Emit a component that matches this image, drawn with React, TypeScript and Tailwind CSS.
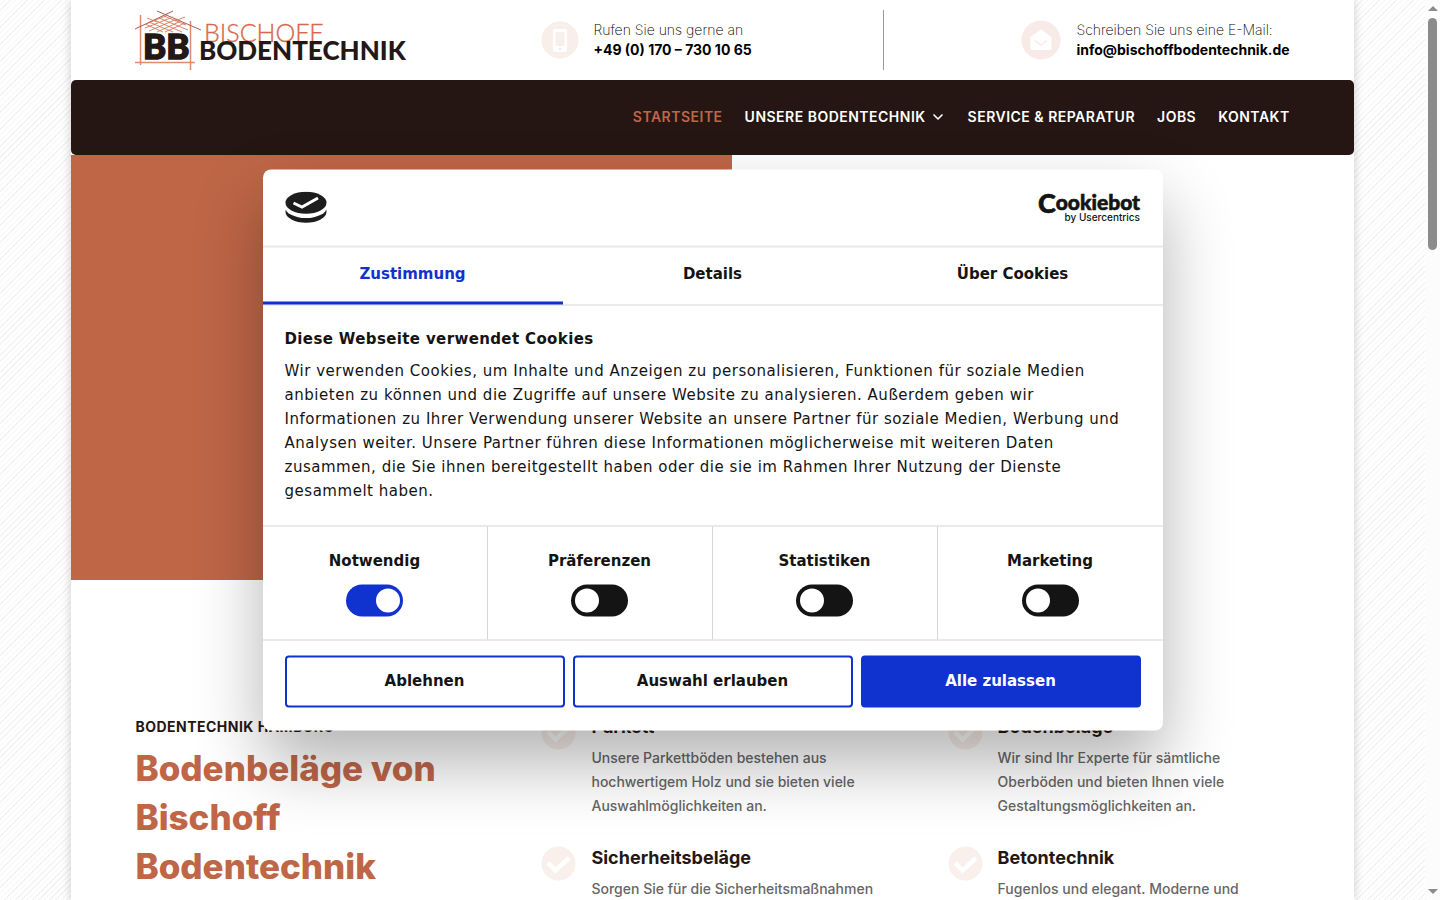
import React, { FC, useState } from "react";
import { ChevronDown } from "lucide-react";

interface NavItem {
  label: string;
  active?: boolean;
  hasMenu?: boolean;
}

interface Service {
  title: string;
  desc: string;
}

const navItems: NavItem[] = [
  { label: "Startseite", active: true },
  { label: "Unsere Bodentechnik", hasMenu: true },
  { label: "Service & Reparatur" },
  { label: "Jobs" },
  { label: "Kontakt" },
];

const serviceColumns: Service[][] = [
  [
    {
      title: "Parkett",
      desc: "Unsere Parkettböden bestehen aus hochwertigem Holz und sie bieten viele Auswahlmöglichkeiten an.",
    },
    {
      title: "Sicherheitsbeläge",
      desc: "Sorgen Sie für die Sicherheitsmaßnahmen",
    },
  ],
  [
    {
      title: "Bodenbeläge",
      desc: "Wir sind Ihr Experte für sämtliche Oberböden und bieten Ihnen viele Gestaltungsmöglichkeiten an.",
    },
    {
      title: "Betontechnik",
      desc: "Fugenlos und elegant. Moderne und",
    },
  ],
];

const tabs = ["Zustimmung", "Details", "Über Cookies"];

const categories = [
  { id: "necessary", label: "Notwendig" },
  { id: "preferences", label: "Präferenzen" },
  { id: "statistics", label: "Statistiken" },
  { id: "marketing", label: "Marketing" },
];

const Logo: FC = () => (
  <svg width="276" height="62" viewBox="0 0 276 62" className="overflow-visible" role="img" aria-label="Bischoff Bodentechnik">
    <g fill="none" stroke="#d9775f">
      <path d="M5.500 6v50M55.500 12v49M0 53.500h60" stroke="#e08a72" strokeWidth="1.500" />
      <path d="M0 20L38 2M22 2L66 21" stroke="#a0604e" />
      <path
        strokeWidth="0.900"
        d="M10 15l18 8M14 13l24 10M19 11l28 12M24 9l29 12M29 7l22 9M12 9l10 4M50 14l-20 9M46 12L22 23M42 10L14 22M38 8L10 19M33 6l-22 9M50 8l-10 4"
      />
    </g>
    <text
      x="8"
      y="50"
      fontFamily="Lato, sans-serif"
      fontWeight="900"
      fontSize="35"
      fill="#231815"
      stroke="#231815"
      strokeWidth="1.500"
    >
      BB
    </text>
    <text x="69" y="33" fontFamily="Lato, sans-serif" fontWeight="300" fontSize="25" fill="#d9674b" stroke="#d9674b" strokeWidth="0.300">
      BISCHOFF
    </text>
    <text x="64" y="51" fontFamily="Lato, sans-serif" fontWeight="900" fontSize="26" fill="#231815">
      BODENTECHNIK
    </text>
  </svg>
);

const PhoneIcon: FC = () => (
  <svg width="38" height="38" viewBox="0 0 38 38" aria-hidden="true">
    <circle cx="19" cy="19" r="18.500" fill="#f8eeea" />
    <path
      fillRule="evenodd"
      fill="#fff"
      d="M14 8h10a2 2 0 0 1 2 2v19a2 2 0 0 1-2 2H14a2 2 0 0 1-2-2V10a2 2 0 0 1 2-2zm.5 3v14h9V11zM19 26.500a1.500 1.500 0 1 0 0 3 1.500 1.500 0 0 0 0-3z"
    />
  </svg>
);

const MailIcon: FC = () => (
  <svg width="40" height="40" viewBox="0 0 40 40" aria-hidden="true">
    <circle cx="20" cy="20" r="19.500" fill="#f8ebe7" />
    <path d="M20 9.500L9.500 17v11.500A1.500 1.500 0 0 0 11 30h18a1.500 1.500 0 0 0 1.500-1.500V17z" fill="#fff" />
    <path d="M14 20.500l6 4.500 6-4.500" fill="none" stroke="#f8ebe7" strokeWidth="1.500" />
  </svg>
);

const CheckIcon: FC = () => (
  <svg className="shrink-0" width="35" height="35" viewBox="0 0 35 35" aria-hidden="true">
    <circle cx="17.500" cy="17.500" r="17" fill="#f9efeb" />
    <path d="M7 17l7.500 7.500L28 12" fill="none" stroke="#fff" strokeWidth="4.500" />
  </svg>
);

const ConsentIcon: FC = () => (
  <svg width="42" height="32" viewBox="0 0 42 32" aria-hidden="true">
    <ellipse cx="21" cy="20.300" rx="20.500" ry="11" fill="#1d1d1d" />
    <ellipse cx="21" cy="15.500" rx="21" ry="11" fill="#fff" />
    <ellipse cx="21" cy="11.300" rx="20.500" ry="11" fill="#1d1d1d" />
    <path d="M8.500 11.500l8.500 4L33 6.500" fill="none" stroke="#fff" strokeWidth="3" />
  </svg>
);

const CookiebotLogo: FC = () => (
  <svg width="103" height="48" viewBox="0 0 103 48" role="img" aria-label="Cookiebot by Usercentrics">
    <g fill="#141414" fontFamily="Lato, sans-serif" textAnchor="end">
      <text x="102" y="29" fontWeight="900" fontSize="21" stroke="#141414" strokeWidth="0.600">
        <tspan fontSize="27">C</tspan>
        <tspan dy="-3">ookiebot</tspan>
      </text>
      <text x="102" y="37" fontFamily="Inter, sans-serif" fontWeight="500" fontSize="10">
        by Usercentrics
      </text>
    </g>
  </svg>
);

const Header: FC = () => (
  <header>
    <div className="mx-auto grid h-20 w-[90%] grid-cols-3 items-center gap-16">
      <a href="#start" className="block">
        <Logo />
      </a>
      <div className="flex h-[60px] items-center gap-[14px] border-r border-[#999]">
        <PhoneIcon />
        <p className="text-sm leading-5 text-black">
          <span className="block font-extralight">Rufen Sie uns gerne an</span>
          <a href="tel:+491707301065" className="block font-bold">
            +49 (0) 170 – 730 10 65
          </a>
        </p>
      </div>
      <div className="flex items-center justify-end gap-[15px]">
        <MailIcon />
        <p className="text-sm leading-5 whitespace-nowrap text-black">
          <span className="block font-extralight">Schreiben Sie uns eine E-Mail:</span>
          <a href="mailto:info@bischoffbodentechnik.de" className="block font-bold">
            info@bischoffbodentechnik.de
          </a>
        </p>
      </div>
    </div>
    <nav className="rounded-[5px] bg-[#261613]">
      <ul className="mx-auto flex h-[75px] w-[90%] items-center justify-end gap-[22px] pb-0.5">
        {navItems.map((item) => (
          <li key={item.label}>
            <a
              href="#nav"
              className={`flex items-center gap-1 text-sm font-semibold tracking-[0.035em] uppercase ${
                item.active ? "text-[#bf6647]" : "text-white"
              }`}
            >
              {item.label}
              {item.hasMenu && <ChevronDown className="h-4 w-4" strokeWidth={2.5} />}
            </a>
          </li>
        ))}
      </ul>
    </nav>
  </header>
);

const ServiceItem: FC<Service> = ({ title, desc }) => (
  <div className="flex gap-[15px]">
    <CheckIcon />
    <div>
      <h3 className="pb-[7px] text-lg leading-6 font-bold text-[#261613]">{title}</h3>
      <p className="text-sm leading-6 font-medium text-[#666]">{desc}</p>
    </div>
  </div>
);

const CookieDialog: FC = () => {
  const [activeTab, setActiveTab] = useState(tabs[0]);
  const [consent, setConsent] = useState<Record<string, boolean>>({ necessary: true });

  return (
    <div
      role="dialog"
      aria-labelledby="consent-title"
      className="absolute top-1/2 left-1/2 w-[900px] max-w-full -translate-x-1/2 -translate-y-1/2 rounded-lg bg-white font-['DejaVu_Sans',sans-serif] text-[15px] text-[#141414] shadow-[0_32px_68px_rgba(0,0,0,0.3)]"
    >
      <div className="flex h-[78px] items-center justify-between border-b-2 border-[#e8e8e8] px-[22px]">
        <ConsentIcon />
        <a href="#cookiebot">
          <CookiebotLogo />
        </a>
      </div>
      <div role="tablist" className="grid h-[58px] grid-cols-3 border-b border-[#d6d6d6]">
        {tabs.map((tab) => (
          <button
            key={tab}
            type="button"
            role="tab"
            aria-selected={tab === activeTab}
            onClick={() => setActiveTab(tab)}
            className={`border-b-3 pb-0.5 font-bold ${
              tab === activeTab ? "border-[#1032cf] text-[#1032cf]" : "border-transparent"
            }`}
          >
            {tab}
          </button>
        ))}
      </div>
      <div className="px-[22px] pt-[21px] pb-[23px]">
        <h2 id="consent-title" className="mb-2 leading-6 font-bold tracking-wide">
          Diese Webseite verwendet Cookies
        </h2>
        <p className="leading-6 tracking-[0.035em]">
          Wir verwenden Cookies, um Inhalte und Anzeigen zu personalisieren, Funktionen für soziale Medien anbieten zu
          können und die Zugriffe auf unsere Website zu analysieren. Außerdem geben wir Informationen zu Ihrer
          Verwendung unserer Website an unsere Partner für soziale Medien, Werbung und Analysen weiter. Unsere Partner
          führen diese Informationen möglicherweise mit weiteren Daten zusammen, die Sie ihnen bereitgestellt haben
          oder die sie im Rahmen Ihrer Nutzung der Dienste gesammelt haben.
        </p>
      </div>
      <div className="grid h-[115px] grid-cols-4 divide-x divide-[#d6d6d6] border-y border-[#d6d6d6]">
        {categories.map(({ id, label }) => (
          <label key={id} className="flex flex-col items-center justify-center gap-3 font-bold">
            {label}
            <input
              type="checkbox"
              checked={!!consent[id]}
              onChange={(e) => setConsent({ ...consent, [id]: e.target.checked })}
              className="flex h-8 w-[57px] appearance-none items-center rounded-full bg-[#141414] px-1 before:block before:h-6 before:w-6 before:rounded-full before:bg-white checked:justify-end checked:bg-[#1032cf] checked:px-[3px]"
            />
          </label>
        ))}
      </div>
      <div className="grid grid-cols-3 gap-2 px-[22px] pt-[15px] pb-[23px] font-bold">
        <button type="button" className="h-[52px] rounded border-2 border-[#1032cf] pb-0.5">
          Ablehnen
        </button>
        <button type="button" className="h-[52px] rounded border-2 border-[#1032cf] pb-0.5">
          Auswahl erlauben
        </button>
        <button type="button" className="h-[52px] rounded border-2 border-[#1032cf] bg-[#1032cf] pb-0.5 text-white">
          Alle zulassen
        </button>
      </div>
    </div>
  );
};

const Scrollbar: FC = () => (
  <div aria-hidden="true" className="flex w-[15px] shrink-0 flex-col items-center justify-between bg-[#fcfcfc] py-1.5">
    <div className="flex w-full flex-col items-center gap-[7px]">
      <div className="border-x-5 border-b-5 border-x-transparent border-b-[#8b8b8b]" />
      <div className="h-[232px] w-[9px] rounded-full bg-[#8b8b8b]" />
    </div>
    <div className="border-x-5 border-t-5 border-x-transparent border-t-[#8b8b8b]" />
  </div>
);

const App: FC = () => (
  <div className="flex h-screen font-[Inter,sans-serif]">
    <div className="relative flex-1 overflow-hidden bg-[repeating-linear-gradient(135deg,#fff_0,#fff_3px,#f3f3f3_3px,#f3f3f3_4px)]">
      <div className="mx-auto min-h-full w-[90%] bg-white shadow-[0_0_10px_rgba(0,0,0,0.2)]">
        <Header />
        <main>
          <div className="h-[425px] w-[51.5%] bg-[#bf6647]" />
          <section className="mx-auto grid w-[90%] grid-cols-3 gap-16 pt-[135px]">
            <div>
              <p className="text-sm leading-6 font-bold tracking-[0.035em] text-[#261613] uppercase">
                Bodentechnik Hamburg
              </p>
              <h1 className="mt-[5px] text-[35px] leading-[49px] font-extrabold text-[#bf6647]">
                Bodenbeläge von Bischoff Bodentechnik
              </h1>
            </div>
            {serviceColumns.map((column) => (
              <div key={column[0].title} className="flex flex-col gap-7">
                {column.map((service) => (
                  <ServiceItem key={service.title} {...service} />
                ))}
              </div>
            ))}
          </section>
        </main>
      </div>
      <CookieDialog />
    </div>
    <Scrollbar />
  </div>
);

export default App;
